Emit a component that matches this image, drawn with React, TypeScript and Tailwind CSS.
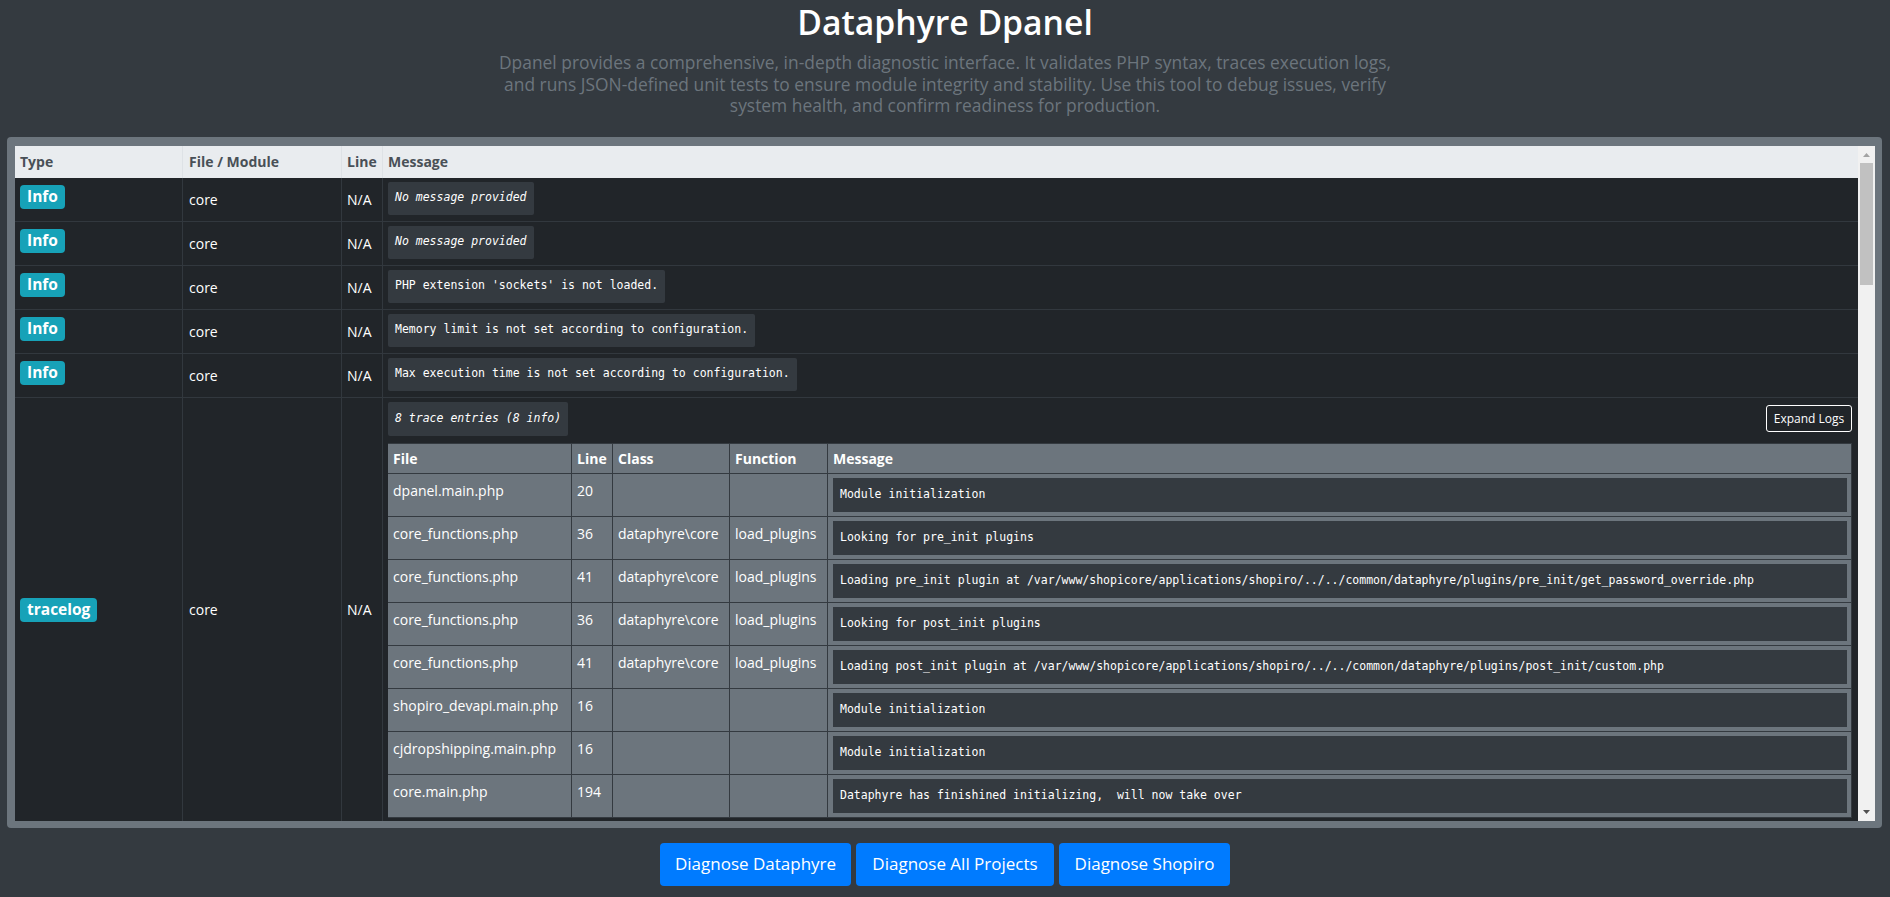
import React from 'react';

type InfoRow = { msg: string; italic?: boolean };

const infoRows: InfoRow[] = [
  { msg: 'No message provided', italic: true },
  { msg: 'No message provided', italic: true },
  { msg: "PHP extension 'sockets' is not loaded." },
  { msg: 'Memory limit is not set according to configuration.' },
  { msg: 'Max execution time is not set according to configuration.' },
];

type Trace = { file: string; line: string; cls: string; fn: string; msg: string };

const traces: Trace[] = [
  { file: 'dpanel.main.php', line: '20', cls: '', fn: '', msg: 'Module initialization' },
  { file: 'core_functions.php', line: '36', cls: 'dataphyre\\core', fn: 'load_plugins', msg: 'Looking for pre_init plugins' },
  {
    file: 'core_functions.php',
    line: '41',
    cls: 'dataphyre\\core',
    fn: 'load_plugins',
    msg: 'Loading pre_init plugin at /var/www/shopicore/applications/shopiro/../../common/dataphyre/plugins/pre_init/get_password_override.php',
  },
  { file: 'core_functions.php', line: '36', cls: 'dataphyre\\core', fn: 'load_plugins', msg: 'Looking for post_init plugins' },
  {
    file: 'core_functions.php',
    line: '41',
    cls: 'dataphyre\\core',
    fn: 'load_plugins',
    msg: 'Loading post_init plugin at /var/www/shopicore/applications/shopiro/../../common/dataphyre/plugins/post_init/custom.php',
  },
  { file: 'shopiro_devapi.main.php', line: '16', cls: '', fn: '', msg: 'Module initialization' },
  { file: 'cjdropshipping.main.php', line: '16', cls: '', fn: '', msg: 'Module initialization' },
  { file: 'core.main.php', line: '194', cls: '', fn: '', msg: 'Dataphyre has finishined initializing,  will now take over' },
];

const mono = "font-['DejaVu_Sans_Mono',monospace] text-[11.5px] whitespace-pre";

function Badge({ label }: { label: string }) {
  return (
    <span className="inline-flex h-[24px] items-center rounded-[4px] bg-[#17a2b8] px-[7px] text-[15.5px] font-bold leading-none text-white">
      {label}
    </span>
  );
}

function CodeBox({ children, italic }: { children: React.ReactNode; italic?: boolean }) {
  return (
    <span
      className={`${mono} ${italic ? 'italic' : ''} inline-flex h-[33px] items-center rounded-[2px] bg-[#343a40] px-[7px] text-white`}
    >
      {children}
    </span>
  );
}

function TraceTable() {
  return (
    <div className="text-[14px] text-white">
      <div className="grid h-[31px] grid-cols-[184px_41px_117px_98px_1fr] border-t border-b border-[#343a40] bg-[#6c757d] font-bold">
        <div className="flex items-center border-r border-[#343a40] px-[5px]">File</div>
        <div className="flex items-center border-r border-[#343a40] px-[5px]">Line</div>
        <div className="flex items-center border-r border-[#343a40] px-[5px]">Class</div>
        <div className="flex items-center border-r border-[#343a40] px-[5px]">Function</div>
        <div className="flex items-center border-r border-[#343a40] px-[5px]">Message</div>
      </div>
      {traces.map((t, i) => (
        <div
          key={i}
          className="grid h-[43px] grid-cols-[184px_41px_117px_98px_1fr] border-b border-[#343a40] bg-[#6c757d] leading-[21px]"
        >
          <div className="border-r border-[#343a40] px-[5px] pt-[6px]">{t.file}</div>
          <div className="border-r border-[#343a40] px-[5px] pt-[6px]">{t.line}</div>
          <div className="border-r border-[#343a40] px-[5px] pt-[6px]">{t.cls}</div>
          <div className="border-r border-[#343a40] px-[5px] pt-[6px]">{t.fn}</div>
          <div className="border-r border-[#343a40] pl-[5px] pr-[4px] pt-[4px]">
            <div className={`${mono} flex h-[34px] items-center bg-[#343a40] px-[7px] leading-none`}>{t.msg}</div>
          </div>
        </div>
      ))}
    </div>
  );
}

function Scrollbar() {
  return (
    <div className="flex w-[17px] flex-col bg-[#f1f1f1]">
      <svg width="17" height="17" viewBox="0 0 17 17">
        <polygon points="5,11 12,11 8.5,7" fill="#a3a3a3" />
      </svg>
      <div className="ml-[2px] h-[122px] w-[13px] bg-[#c1c1c1]" />
      <div className="flex-1" />
      <svg width="17" height="17" viewBox="0 0 17 17">
        <polygon points="5,6 12,6 8.5,10" fill="#505050" />
      </svg>
    </div>
  );
}

export default function App() {
  return (
    <div className="min-h-screen bg-[#343a40] font-['Open_Sans',sans-serif] pb-[11px]">
      <h1 className="pt-[2px] text-center text-[33.7px] font-semibold leading-[40px] text-white">Dataphyre Dpanel</h1>
      <p className="mt-[10px] text-center text-[17.4px] leading-[21.5px] text-[#6c757d]">
        Dpanel provides a comprehensive, in-depth diagnostic interface. It validates PHP syntax, traces execution logs,
        <br />
        and runs JSON-defined unit tests to ensure module integrity and stability. Use this tool to debug issues, verify
        <br />
        system health, and confirm readiness for production.
      </p>

      <div className="mt-[20px] ml-[7px] mr-[8px] rounded-[4px] bg-[#6c757d] pt-[9px] pl-[8px] pr-[7px] pb-[7px]">
        <div className="flex h-[675px]">
          <div className="flex-1 overflow-hidden bg-[#212529] text-[14px] text-white">
            <div className="grid h-[32px] grid-cols-[168px_159px_41px_1fr] bg-[#e9ecef] text-[14px] font-bold text-[#495057]">
              <div className="flex items-center border-r border-[#dee2e6] px-[5px]">Type</div>
              <div className="flex items-center border-r border-[#dee2e6] px-[6px]">File / Module</div>
              <div className="flex items-center border-r border-[#dee2e6] px-[5px]">Line</div>
              <div className="flex items-center px-[5px]">Message</div>
            </div>

            {infoRows.map((r, i) => (
              <div key={i} className="grid h-[44px] grid-cols-[168px_159px_41px_1fr] border-b border-[#32383e]">
                <div className="border-r border-[#32383e] pl-[5px] pt-[7px]">
                  <Badge label="Info" />
                </div>
                <div className="flex items-center border-r border-[#32383e] px-[6px]">core</div>
                <div className="flex items-center border-r border-[#32383e] px-[5px]">N/A</div>
                <div className="px-[5px] pt-[4px]">
                  <CodeBox italic={r.italic}>{r.msg}</CodeBox>
                </div>
              </div>
            ))}

            <div className="grid grid-cols-[168px_159px_41px_1fr] border-b border-[#32383e]">
              <div className="flex items-center border-r border-[#32383e] pl-[5px]">
                <Badge label="tracelog" />
              </div>
              <div className="flex items-center border-r border-[#32383e] px-[6px]">core</div>
              <div className="flex items-center border-r border-[#32383e] px-[5px]">N/A</div>
              <div className="pl-[5px] pr-[6px] pt-[4px] pb-[4px]">
                <div className="flex items-center justify-between">
                  <span
                    className={`${mono} inline-flex h-[34px] items-center rounded-[2px] bg-[#343a40] px-[7px] italic text-white`}
                  >
                    8 trace entries (8 info)
                  </span>
                  <button className="h-[27px] w-[86px] rounded-[3px] border border-white text-[12px] text-white">
                    Expand Logs
                  </button>
                </div>
                <div className="mt-[7px]">
                  <TraceTable />
                </div>
              </div>
            </div>
          </div>
          <Scrollbar />
        </div>
      </div>

      <div className="mt-[15px] flex justify-center gap-[5px]">
        <button className="h-[43px] w-[191px] rounded-[4px] bg-[#007bff] text-[17px] text-white">Diagnose Dataphyre</button>
        <button className="h-[43px] w-[198px] rounded-[4px] bg-[#007bff] text-[17px] text-white">Diagnose All Projects</button>
        <button className="h-[43px] w-[171px] rounded-[4px] bg-[#007bff] text-[17px] text-white">Diagnose Shopiro</button>
      </div>
    </div>
  );
}
